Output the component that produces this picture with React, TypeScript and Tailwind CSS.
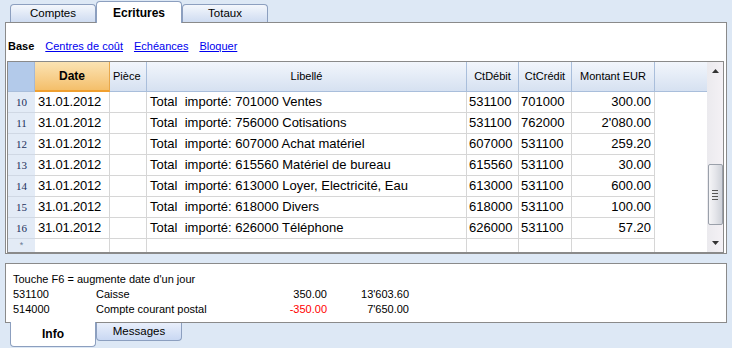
import React from "react";

const rows = [
  ["10", "31.01.2012", "Total  importé: 701000 Ventes", "531100", "701000", "300.00"],
  ["11", "31.01.2012", "Total  importé: 756000 Cotisations", "531100", "762000", "2'080.00"],
  ["12", "31.01.2012", "Total  importé: 607000 Achat matériel", "607000", "531100", "259.20"],
  ["13", "31.01.2012", "Total  importé: 615560 Matériel de bureau", "615560", "531100", "30.00"],
  ["14", "31.01.2012", "Total  importé: 613000 Loyer, Electricité, Eau", "613000", "531100", "600.00"],
  ["15", "31.01.2012", "Total  importé: 618000 Divers", "618000", "531100", "100.00"],
  ["16", "31.01.2012", "Total  importé: 626000 Téléphone", "626000", "531100", "57.20"],
];

const ui = "font-['Liberation_Sans',Arial,sans-serif] text-[11px]";

export default function App() {
  return (
    <div className={`w-[732px] h-[348px] bg-[#dde8f5] relative overflow-hidden ${ui} text-black`}>
      {/* top tabs */}
      <div className="flex items-end h-[22px] pl-[10px]">
        <div className="w-[86px] h-[18px] border border-b-0 border-[#8c9fbf] rounded-t-[4px] bg-gradient-to-b from-[#f4f7fc] to-[#cfdcf1] flex items-center justify-center text-[11.5px]">
          Comptes
        </div>
        <div className="w-[86px] h-[22px] border border-b-0 border-[#8c9fbf] rounded-t-[4px] bg-white flex items-center justify-center text-[12px] font-bold relative z-10 -mb-px">
          Ecritures
        </div>
        <div className="w-[86px] h-[18px] border border-b-0 border-[#8c9fbf] rounded-t-[4px] bg-gradient-to-b from-[#f4f7fc] to-[#cfdcf1] flex items-center justify-center text-[11.5px]">
          Totaux
        </div>
      </div>

      {/* main panel */}
      <div className="ml-[5px] w-[722px] h-[232px] border border-[#8a8a8a] bg-white flex flex-col">
        <div className="h-[38px] flex items-center gap-[11px] pl-[2px] pt-[8px] text-[11px]">
          <span className="font-bold">Base</span>
          <span className="text-[#0000ee] underline">Centres de coût</span>
          <span className="text-[#0000ee] underline">Echéances</span>
          <span className="text-[#0000ee] underline">Bloquer</span>
        </div>
        {/* grid */}
        <div className="ml-[1px] w-[717px] h-[192px] border border-[#8a8a8a] flex">
          <div className="flex flex-col w-[699px]">
            {/* header */}
            <div className="flex h-[30px] bg-gradient-to-b from-[#f2f6fc] to-[#d6e1f1] border-b border-[#a9bedb]">
              <div className="w-[27px] bg-[#b3caea] border-r border-[#a3b8d8]" />
              <div className="w-[75px] bg-gradient-to-b from-[#fbe3b3] to-[#f4bf6a] border-r border-[#e9a84a] border-b-2 border-b-[#f0a030] -mb-px flex items-center justify-center font-bold text-[12px]">
                Date
              </div>
              <div className="w-[37px] border-r border-[#a9bedb] flex items-center pl-[3px]">Pièce</div>
              <div className="w-[320px] border-r border-[#a9bedb] flex items-center justify-center">Libellé</div>
              <div className="w-[52px] border-r border-[#a9bedb] flex items-center justify-center">CtDébit</div>
              <div className="w-[53px] border-r border-[#a9bedb] flex items-center justify-center">CtCrédit</div>
              <div className="w-[83px] border-r border-[#a9bedb] flex items-center justify-center">Montant EUR</div>
              <div className="flex-1" />
            </div>
            {/* rows */}
            {rows.map((r) => (
              <div key={r[0]} className="flex h-[21px] font-['Liberation_Sans',Arial,sans-serif] text-[13px]">
                <div className="w-[27px] bg-[#e3ebf6] border-b border-[#d0d8e4] flex items-center justify-center font-['Liberation_Serif',serif] text-[11px] text-[#1b2f5c]">
                  {r[0]}
                </div>
                <div className="w-[75px] border-r border-b border-[#d6d6d6] flex items-center pl-[3px] tracking-[-0.2px]">{r[1]}</div>
                <div className="w-[37px] border-r border-b border-[#d6d6d6]" />
                <div className="w-[320px] border-r border-b border-[#d6d6d6] flex items-center pl-[3px] whitespace-pre">{r[2]}</div>
                <div className="w-[52px] border-r border-b border-[#d6d6d6] flex items-center pl-[2px]">{r[3]}</div>
                <div className="w-[53px] border-r border-b border-[#d6d6d6] flex items-center pl-[2px]">{r[4]}</div>
                <div className="w-[83px] border-r border-b border-[#d6d6d6] flex items-center justify-end pr-[3px]">{r[5]}</div>
                <div className="flex-1" />
              </div>
            ))}
            <div className="flex h-[13px]">
              <div className="w-[27px] bg-[#e3ebf6] flex items-center justify-center text-[9px] text-[#6a7a94] leading-none">*</div>
              <div className="w-[75px] border-r border-[#d6d6d6]" />
              <div className="w-[37px] border-r border-[#d6d6d6]" />
              <div className="w-[320px] border-r border-[#d6d6d6]" />
              <div className="w-[52px] border-r border-[#d6d6d6]" />
              <div className="w-[53px] border-r border-[#d6d6d6]" />
              <div className="w-[83px] border-r border-[#d6d6d6]" />
              <div className="flex-1" />
            </div>
          </div>
          {/* scrollbar */}
          <div className="flex-1 bg-gradient-to-r from-[#ebeaee] to-[#f4f1f5] flex flex-col items-center">
            <div className="h-[18px] flex items-center justify-center">
              <svg width="7" height="4" viewBox="0 0 7 4"><path d="M3.5 0 L7 4 L0 4 Z" fill="#333" /></svg>
            </div>
            <div className="h-[84px]" />
            <div className="w-[15px] h-[61px] border border-[#9aa0aa] rounded-[2px] bg-gradient-to-r from-[#f5f5f7] via-[#e4e5ea] to-[#cfd2d9] flex flex-col items-center justify-center gap-[2px]">
              <div className="w-[6px] h-px bg-[#555]" />
              <div className="w-[6px] h-px bg-[#555]" />
              <div className="w-[6px] h-px bg-[#555]" />
              <div className="w-[6px] h-px bg-[#555]" />
            </div>
            <div className="flex-1 flex items-end pb-[7px]">
              <svg width="7" height="4" viewBox="0 0 7 4"><path d="M0 0 L7 0 L3.5 4 Z" fill="#333" /></svg>
            </div>
          </div>
        </div>
      </div>

      {/* bottom panel */}
      <div className="ml-[5px] mt-[9px] w-[722px] h-[60px] border border-[#8a8a8a] bg-white pl-[7px] pt-[8px] text-[11px] leading-[15px]">
        <div>Touche F6 = augmente date d'un jour</div>
        <div className="flex">
          <span className="w-[83px]">531100</span>
          <span className="w-[160px]">Caisse</span>
          <span className="w-[71px] text-right">350.00</span>
          <span className="w-[82px] text-right">13'603.60</span>
        </div>
        <div className="flex">
          <span className="w-[83px]">514000</span>
          <span className="w-[160px]">Compte courant postal</span>
          <span className="w-[71px] text-right text-[#ff0000]">-350.00</span>
          <span className="w-[82px] text-right">7'650.00</span>
        </div>
      </div>

      {/* bottom tabs */}
      <div className="flex items-start pl-[10px] -mt-px">
        <div className="w-[86px] h-[25px] border border-t-0 border-[#8c9fbf] rounded-b-[4px] bg-white flex items-center justify-center font-bold text-[12px] relative z-10">
          Info
        </div>
        <div className="w-[86px] h-[18px] mt-px border border-t-0 border-[#8c9fbf] rounded-b-[4px] bg-gradient-to-b from-[#e9effb] to-[#c9d8f3] flex items-center justify-center text-[11.5px]">
          Messages
        </div>
      </div>
    </div>
  );
}
